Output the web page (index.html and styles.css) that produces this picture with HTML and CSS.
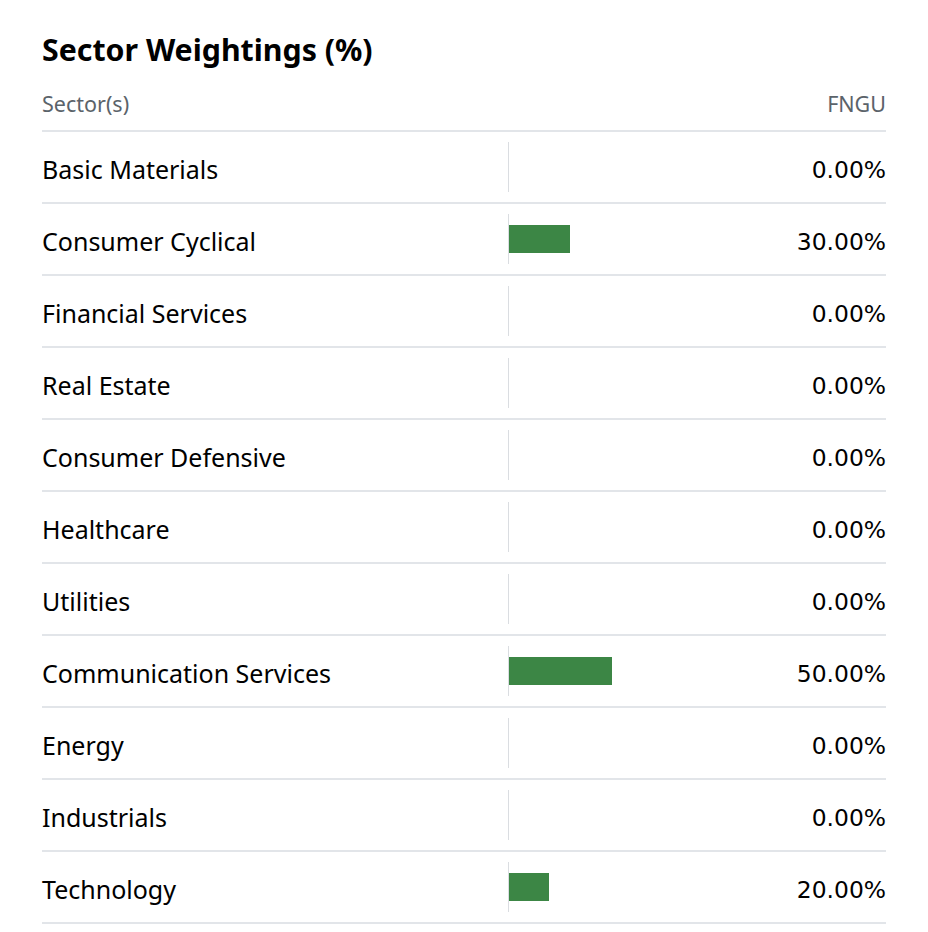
FILE: index.html
```html
<!DOCTYPE html>
<html lang="en">
<head>
<meta charset="utf-8">
<title>Sector Weightings</title>
<link rel="stylesheet" href="styles.css">
</head>
<body>
<section class="card">
  <h2 class="title">Sector Weightings (%)</h2>
  <div class="table">
    <div class="row head">
      <span class="label">Sector(s)</span>
      <span class="bar-col"></span>
      <span class="value">FNGU</span>
    </div>
    <div class="row"><span class="label">Basic Materials</span><span class="bar-col"><span class="bar" style="width:0px"></span></span><span class="value">0.00%</span></div>
    <div class="row"><span class="label">Consumer Cyclical</span><span class="bar-col"><span class="bar" style="width:61px"></span></span><span class="value">30.00%</span></div>
    <div class="row"><span class="label">Financial Services</span><span class="bar-col"><span class="bar" style="width:0px"></span></span><span class="value">0.00%</span></div>
    <div class="row"><span class="label">Real Estate</span><span class="bar-col"><span class="bar" style="width:0px"></span></span><span class="value">0.00%</span></div>
    <div class="row"><span class="label">Consumer Defensive</span><span class="bar-col"><span class="bar" style="width:0px"></span></span><span class="value">0.00%</span></div>
    <div class="row"><span class="label">Healthcare</span><span class="bar-col"><span class="bar" style="width:0px"></span></span><span class="value">0.00%</span></div>
    <div class="row"><span class="label">Utilities</span><span class="bar-col"><span class="bar" style="width:0px"></span></span><span class="value">0.00%</span></div>
    <div class="row"><span class="label">Communication Services</span><span class="bar-col"><span class="bar" style="width:103px"></span></span><span class="value">50.00%</span></div>
    <div class="row"><span class="label">Energy</span><span class="bar-col"><span class="bar" style="width:0px"></span></span><span class="value">0.00%</span></div>
    <div class="row"><span class="label">Industrials</span><span class="bar-col"><span class="bar" style="width:0px"></span></span><span class="value">0.00%</span></div>
    <div class="row"><span class="label">Technology</span><span class="bar-col"><span class="bar" style="width:40px"></span></span><span class="value">20.00%</span></div>
  </div>
</section>
</body>
</html>
```
FILE: styles.css
```css
html, body {
  margin: 0;
  padding: 0;
  background: #ffffff;
}

.card {
  width: 844px;
  padding: 30px 42px 0;
  font-family: "Noto Sans", "DejaVu Sans", sans-serif;
  color: #000000;
}

.title {
  margin: 0;
  font-family: "Noto Sans", sans-serif;
  font-weight: 700;
  font-size: 30.3px;
  line-height: 40px;
}

.table {
  display: flex;
  flex-direction: column;
}

.row {
  display: grid;
  grid-template-columns: 466px 205px 1fr;
  align-items: center;
  height: 70px;
  border-bottom: 2px solid #e2e5e9;
}

.row.head {
  height: 60px;
}

.row.head .label,
.row.head .value {
  font-family: "Noto Sans", sans-serif;
  font-size: 21.5px;
  color: #5b636a;
  padding-top: 6px;
}

.row.head .bar-col {
  border-left: none;
}

.label {
  font-size: 25px;
  padding-top: 3px;
}

.bar-col {
  height: 50px;
  border-left: 1px solid #dadde1;
  display: flex;
  align-items: center;
}

.bar {
  display: block;
  height: 28px;
  background: #3c8645;
}

.value {
  text-align: right;
  font-family: "DejaVu Sans", sans-serif;
  font-size: 23.4px;
  padding-top: 5px;
}
```
